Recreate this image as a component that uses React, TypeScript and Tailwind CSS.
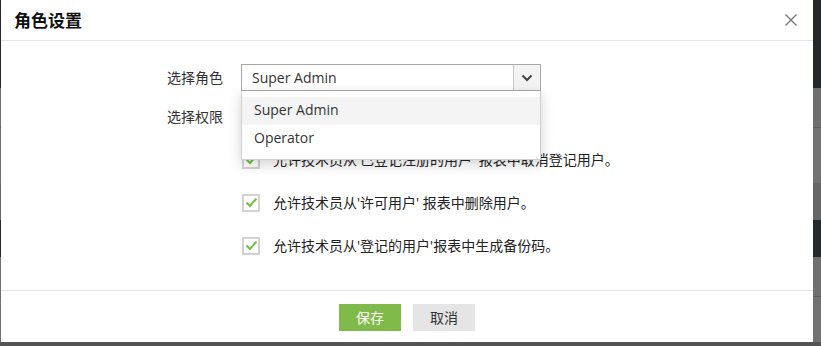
import { useState } from 'react'

const ROLES = ['Super Admin', 'Operator']

const PERMISSIONS = [
  "允许技术员从'已登记注册的用户' 报表中取消登记用户。",
  "允许技术员从'许可用户' 报表中删除用户。",
  "允许技术员从'登记的用户'报表中生成备份码。",
]

function Check() {
  return (
    <div className="w-[18px] h-[18px] border-2 border-[#d2d2d2] bg-white flex items-center justify-center shrink-0">
      <svg width="13" height="11" viewBox="0 0 13 11" fill="none">
        <path d="M1.5 5.5 L5 9 L11.5 1.5" stroke="#72bf44" strokeWidth="2" />
      </svg>
    </div>
  )
}

export default function App() {
  const [role, setRole] = useState('Super Admin')
  const [open, setOpen] = useState(true)

  return (
    <div
      className="relative w-[821px] h-[346px] overflow-hidden bg-[#545454]"
      style={{ fontFamily: '"Open Sans", "Noto Sans CJK SC", sans-serif' }}
    >
      {/* page behind the dialog */}
      <div className="flex flex-col">
        <div className="h-[88px] bg-[#23282b]" />
        <div className="h-[40px] bg-[#6f6f6f] border-b border-[#5f5f5f]" />
        <div className="h-[55px] bg-[#727272]" />
        <div className="h-[37px] bg-[#676767]" />
        <div className="h-[37px] bg-[#24292c]" />
        <div className="h-[40px] bg-[#707070] border-b border-[#5f5f5f]" />
        <div className="h-[45px] bg-[#727272]" />
      </div>

      {/* dialog */}
      <div className="absolute left-[1px] top-0 w-[812px] h-[342px] bg-white flex flex-col">
        <div className="h-[41px] border-b border-[#e5e5e5] flex items-center justify-between pl-[13px] pr-[15px] shrink-0">
          <h2 className="text-[17px] font-bold text-[#111] leading-none">角色设置</h2>
          <button className="w-[14px] h-[14px] flex items-center justify-center">
            <svg width="12" height="12" viewBox="0 0 12 12">
              <path d="M0.5 0.5 L11.5 11.5 M11.5 0.5 L0.5 11.5" stroke="#777" strokeWidth="1.4" />
            </svg>
          </button>
        </div>

        <div className="flex-1 pt-[23px] pl-[166px] text-[14px] text-[#333]">
          <div className="flex items-center h-[27px]">
            <div className="w-[74px]">选择角色</div>
            <div className="relative w-[300px] h-[27px]">
              <div
                className="h-full border border-[#a8a8a8] flex items-center cursor-pointer"
                onClick={() => setOpen(!open)}
              >
                <span className="flex-1 pl-[10px]">{role}</span>
                <span className="w-[27px] h-full border-l border-[#c8c8c8] bg-[#f3f3f3] flex items-center justify-center">
                  <svg width="12" height="8" viewBox="0 0 12 8" fill="none">
                    <path d="M1.5 1.5 L6 6 L10.5 1.5" stroke="#444" strokeWidth="2" />
                  </svg>
                </span>
              </div>
              {open && (
                <div className="absolute left-0 top-full w-[300px] bg-white border border-[#cfcfcf] border-t-0 py-[6px] shadow-[0_4px_12px_rgba(0,0,0,0.18)] z-10">
                  {ROLES.map((r) => (
                    <div
                      key={r}
                      className={`h-[28px] flex items-center pl-[12px] pb-[4px] cursor-pointer ${
                        r === role ? 'bg-[#f4f4f4]' : ''
                      }`}
                      onClick={() => {
                        setRole(r)
                        setOpen(false)
                      }}
                    >
                      {r}
                    </div>
                  ))}
                </div>
              )}
            </div>
          </div>

          <div className="mt-[15px] h-[22px] leading-[22px]">选择权限</div>

          <div className="mt-[10px] pl-[75px] flex flex-col">
            {PERMISSIONS.map((p) => (
              <div key={p} className="h-[43px] flex items-center gap-[13px] text-[#222]">
                <Check />
                <span>{p}</span>
              </div>
            ))}
          </div>
        </div>

        <div className="h-[52px] border-t border-[#e5e5e5] flex justify-center gap-[12px] pt-[13px] shrink-0">
          <button className="w-[62px] h-[27px] bg-[#80ba4a] text-white text-[14px]">保存</button>
          <button className="w-[62px] h-[27px] bg-[#e5e5e5] text-[#333] text-[14px]">取消</button>
        </div>
      </div>
    </div>
  )
}
